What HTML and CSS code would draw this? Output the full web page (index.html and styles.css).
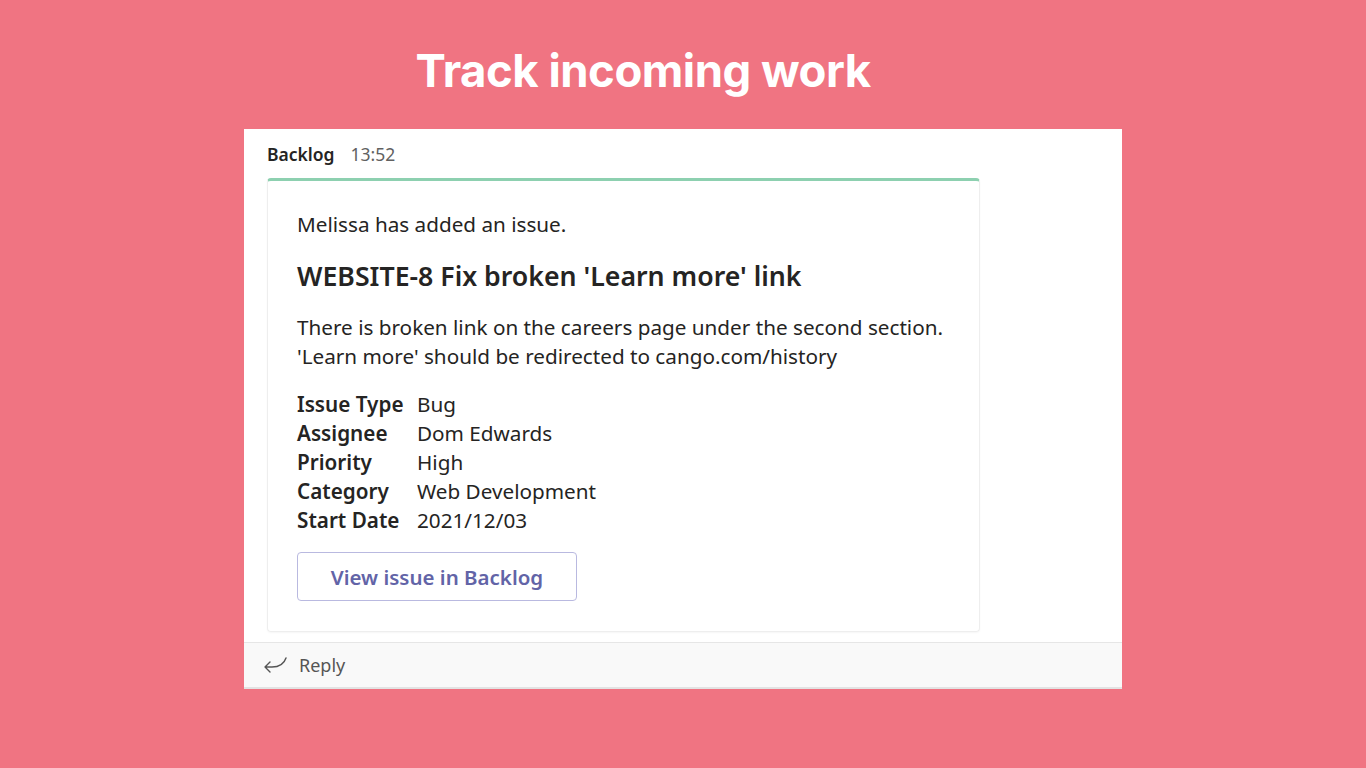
FILE: index.html
```html
<!DOCTYPE html>
<html lang="en">
<head>
<meta charset="utf-8">
<title>Track incoming work</title>
<link rel="stylesheet" href="styles.css">
</head>
<body>
<main class="stage">
  <h1 class="headline">Track incoming work</h1>
  <section class="panel">
    <div class="panel-body">
      <div class="meta">
        <span class="sender">Backlog</span>
        <span class="time">13:52</span>
      </div>
      <article class="card">
        <p class="intro">Melissa has added an issue.</p>
        <h2 class="issue-title">WEBSITE-8 Fix broken 'Learn more' link</h2>
        <p class="desc">There is broken link on the careers page under the second section.<br>'Learn more' should be redirected to cango.com/history</p>
        <dl class="facts">
          <dt>Issue Type</dt><dd>Bug</dd>
          <dt>Assignee</dt><dd>Dom Edwards</dd>
          <dt>Priority</dt><dd>High</dd>
          <dt>Category</dt><dd>Web Development</dd>
          <dt>Start Date</dt><dd>2021/12/03</dd>
        </dl>
        <button class="action" type="button">View issue in Backlog</button>
      </article>
    </div>
    <footer class="reply">
      <svg class="reply-icon" width="26" height="20" viewBox="0 0 26 20" aria-hidden="true">
        <path d="M23 3 C21 9 16 12 9 12 L2 12 M7 7 L2 12 L7 17" fill="none" stroke="#555" stroke-width="1.4" stroke-linecap="round" stroke-linejoin="round"/>
      </svg>
      <span class="reply-text">Reply</span>
    </footer>
  </section>
</main>
</body>
</html>
```

FILE: styles.css
```css
* { box-sizing: border-box; }
html, body { margin: 0; padding: 0; }
body {
  background: #f07482;
  width: 1366px;
  height: 768px;
  overflow: hidden;
  font-family: "Noto Sans", "Open Sans", sans-serif;
  color: #252423;
}
.stage {
  display: flex;
  flex-direction: column;
  align-items: center;
}
.headline {
  margin: 41px 80px 0 0;
  height: 88px;
  font-family: Inter, "Liberation Sans", sans-serif;
  font-weight: 700;
  font-size: 45.5px;
  line-height: 60px;
  color: #fff;
  letter-spacing: -0.5px;
}
.panel {
  width: 878px;
  height: 560px;
  background: #fff;
  display: flex;
  flex-direction: column;
}
.panel-body {
  flex: 1;
  padding: 13px 0 0 23px;
}
.meta {
  display: flex;
  align-items: baseline;
  gap: 16px;
  font-size: 17.5px;
  line-height: 24px;
}
.sender { font-weight: 600; color: #252423; }
.time { color: #616161; }
.card {
  margin-top: 12px;
  width: 713px;
  height: 454px;
  border: 1px solid #eeeeee;
  border-top: 3px solid #8dd0b0;
  border-radius: 4px;
  box-shadow: 0 1px 2px rgba(0,0,0,0.04);
  padding: 29px 20px 0 29px;
}
.intro {
  margin: 0;
  font-size: 20.7px;
  line-height: 28px;
}
.issue-title {
  margin: 21px 0 0 0;
  font-size: 26.7px;
  font-weight: 600;
  line-height: 34px;
}
.desc {
  margin: 20px 0 0 0;
  font-size: 20.7px;
  line-height: 29px;
  white-space: nowrap;
}
.facts {
  margin: 19px 0 0 0;
  display: grid;
  grid-template-columns: 120px 1fr;
  font-size: 20.7px;
  line-height: 29px;
}
.facts dt { font-weight: 600; }
.facts dd { margin: 0; }
.action {
  margin-top: 17px;
  width: 280px;
  height: 49px;
  background: #fff;
  border: 1px solid #b9b9e0;
  border-radius: 4px;
  font-family: "Noto Sans", "Open Sans", sans-serif;
  font-size: 20.5px;
  font-weight: 600;
  color: #6264a7;
  padding: 0;
}
.reply {
  height: 47px;
  background: #f9f9f9;
  border-top: 1px solid #e6e6e6;
  border-bottom: 2px solid #e3e3e3;
  display: flex;
  align-items: center;
  padding-left: 19px;
  gap: 10px;
}
.reply-icon { display: block; }
.reply-text {
  font-size: 18px;
  color: #555;
}
```
